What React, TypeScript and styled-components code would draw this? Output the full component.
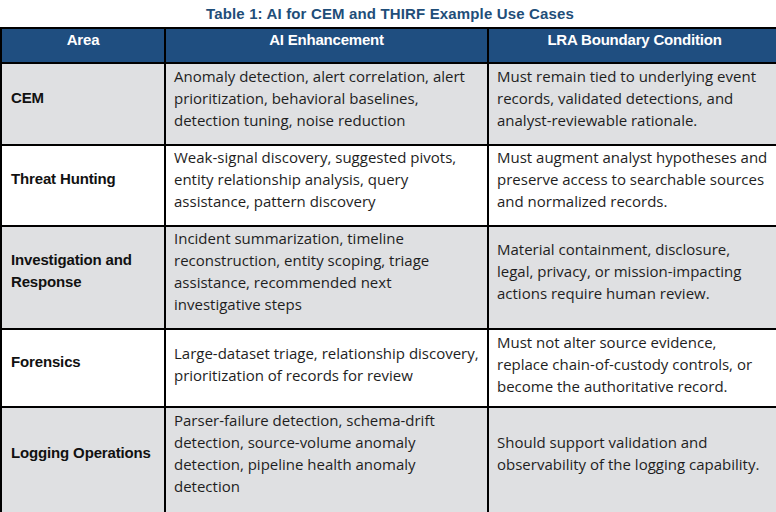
import React from "react";
import styled, { createGlobalStyle } from "styled-components";

const Global = createGlobalStyle`
  html, body { margin: 0; padding: 0; background: #ffffff; overflow: hidden; }
  body { width: 776px; height: 512px; }
`;

const Page = styled.div`
  width: 776px;
  height: 512px;
  overflow: hidden;
  font-family: "Open Sans", "Liberation Sans", Arial, sans-serif;
`;

const Caption = styled.div`
  height: 27px;
  padding-top: 5px;
  box-sizing: border-box;
  text-align: center;
  font-family: "Liberation Sans", Arial, sans-serif;
  font-weight: 700;
  font-size: 15px;
  line-height: 18px;
  color: #1f4e79;
  letter-spacing: 0.15px;
  padding-left: 4px;
`;

const Table = styled.table`
  width: 780px;
  border-collapse: collapse;
  table-layout: fixed;
`;

const HeadCell = styled.th`
  background: #1f4e80;
  color: #ffffff;
  border: 2px solid #000000;
  height: 35px;
  padding: 2px 8px 0;
  vertical-align: top;
  text-align: center;
  font-family: "Liberation Sans", Arial, sans-serif;
  font-weight: 700;
  font-size: 15px;
  line-height: 18px;
  letter-spacing: -0.2px;
  box-sizing: border-box;
`;

const Row = styled.tr<{ $shade: boolean; $h: number }>`
  background: ${(p) => (p.$shade ? "#dfe0e2" : "#ffffff")};
  height: ${(p) => p.$h}px;
`;

const AreaCell = styled.td<{ $pb: number }>`
  border: 2px solid #000000;
  padding: 0 8px ${(p) => p.$pb}px 9px;
  vertical-align: middle;
  font-family: "Liberation Sans", Arial, sans-serif;
  font-weight: 700;
  font-size: 15px;
  line-height: 22px;
  color: #111111;
  letter-spacing: -0.15px;
`;

const TextCell = styled.td<{ $pb: number }>`
  border: 2px solid #000000;
  padding: 0 6px ${(p) => p.$pb}px 8px;
  vertical-align: middle;
  font-size: 15px;
  line-height: 22px;
  color: #1e1e1e;
  white-space: nowrap;
  letter-spacing: 0;
`;

const Line = styled.span`
  display: block;
`;

type Item = {
  area: string[];
  ai: string[];
  lra: string[];
  h: number;
  pb: number;
  apb: number;
};

const rows: Item[] = [
  {
    area: ["CEM"],
    ai: [
      "Anomaly detection, alert correlation, alert",
      "prioritization, behavioral baselines,",
      "detection tuning, noise reduction",
    ],
    lra: [
      "Must remain tied to underlying event",
      "records, validated detections, and",
      "analyst-reviewable rationale.",
    ],
    h: 82,
    pb: 13,
    apb: 13,
  },
  {
    area: ["Threat Hunting"],
    ai: [
      "Weak-signal discovery, suggested pivots,",
      "entity relationship analysis, query",
      "assistance, pattern discovery",
    ],
    lra: [
      "Must augment analyst hypotheses and",
      "preserve access to searchable sources",
      "and normalized records.",
    ],
    h: 81,
    pb: 13,
    apb: 13,
  },
  {
    area: ["Investigation and", "Response"],
    ai: [
      "Incident summarization, timeline",
      "reconstruction, entity scoping, triage",
      "assistance, recommended next",
      "investigative steps",
    ],
    lra: [
      "Material containment, disclosure,",
      "legal, privacy, or mission-impacting",
      "actions require human review.",
    ],
    h: 103,
    pb: 13,
    apb: 13,
  },
  {
    area: ["Forensics"],
    ai: [
      "Large-dataset triage, relationship discovery,",
      "prioritization of records for review",
    ],
    lra: [
      "Must not alter source evidence,",
      "replace chain-of-custody controls, or",
      "become the authoritative record.",
    ],
    h: 78,
    pb: 9,
    apb: 13,
  },
  {
    area: ["Logging Operations"],
    ai: [
      "Parser-failure detection, schema-drift",
      "detection, source-volume anomaly",
      "detection, pipeline health anomaly",
      "detection",
    ],
    lra: [
      "Should support validation and",
      "observability of the logging capability.",
    ],
    h: 113,
    pb: 21,
    apb: 21,
  },
];

const Lines = ({ items }: { items: string[] }) => (
  <>
    {items.map((t) => (
      <Line key={t}>{t}</Line>
    ))}
  </>
);

export default function App() {
  return (
    <Page>
      <Global />
      <Caption>Table 1: AI for CEM and THIRF Example Use Cases</Caption>
      <Table>
        <colgroup>
          <col style={{ width: 164 }} />
          <col style={{ width: 323 }} />
          <col style={{ width: 293 }} />
        </colgroup>
        <thead>
          <tr>
            <HeadCell>Area</HeadCell>
            <HeadCell>AI Enhancement</HeadCell>
            <HeadCell>LRA Boundary Condition</HeadCell>
          </tr>
        </thead>
        <tbody>
          {rows.map((r, i) => (
            <Row key={i} $shade={i % 2 === 0} $h={r.h}>
              <AreaCell $pb={r.apb}>
                <Lines items={r.area} />
              </AreaCell>
              <TextCell $pb={r.pb}>
                <Lines items={r.ai} />
              </TextCell>
              <TextCell $pb={r.pb}>
                <Lines items={r.lra} />
              </TextCell>
            </Row>
          ))}
        </tbody>
      </Table>
    </Page>
  );
}
